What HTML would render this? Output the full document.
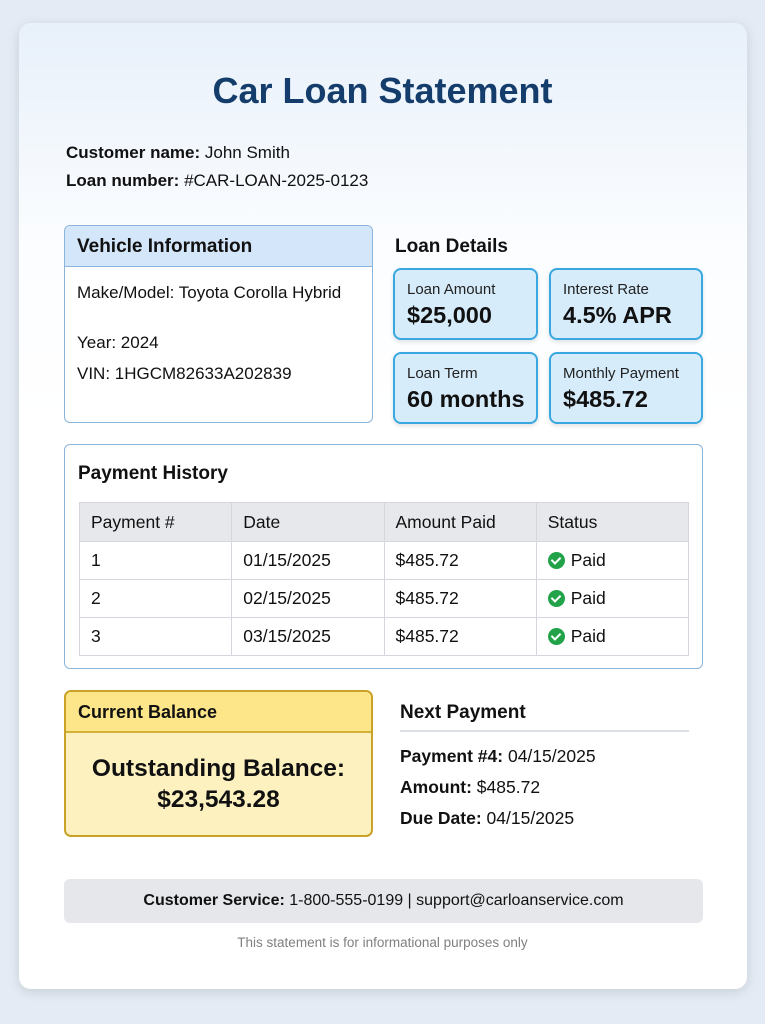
<!DOCTYPE html>
<html><head><meta charset="utf-8"><style>
*{box-sizing:border-box;margin:0;padding:0}
body{width:765px;height:1024px;background:#e4ebf4;font-family:"Liberation Sans",sans-serif;color:#111;position:relative;overflow:hidden}
.card{position:absolute;left:19px;top:23px;width:728px;height:966px;border-radius:12px;background:linear-gradient(#e8f0fa 0px,#fbfdff 220px,#fff 400px);box-shadow:0 3px 12px rgba(0,0,0,.12)}
.a{position:absolute}
h1{position:absolute;left:0;width:765px;top:70px;text-align:center;font-size:36px;color:#143d6b;font-weight:bold}
.t16{font-size:17px}
.box{position:absolute;border:1px solid #8ab4dc;border-radius:6px;background:#fff;overflow:hidden}
.tile{position:absolute;width:145px;height:72px;background:#d6ecfb;border:2px solid #3aa8e0;border-radius:8px;box-shadow:0 2px 5px rgba(0,0,0,.12)}
.tile .l{position:absolute;left:12px;top:11px;font-size:15px;color:#222;white-space:nowrap}
.tile .v{position:absolute;left:12px;top:32px;font-size:23.5px;font-weight:bold;white-space:nowrap}
table{position:absolute;left:14px;top:57px;width:610px;border-collapse:collapse;font-size:17.5px}
td{border:1px solid #d4d8de;height:38px;padding-left:11px;width:25%}
tr:first-child td{background:#e6e8ec;height:39px}
.chk{display:inline-block;width:17px;height:17px;border-radius:50%;background:#22a34a;vertical-align:-3px;margin-right:6px;position:relative}
.chk:after{content:"";position:absolute;left:5px;top:3px;width:4px;height:7px;border:solid #fff;border-width:0 2px 2px 0;transform:rotate(45deg)}
</style></head><body>
<div class="card"></div>
<h1>Car Loan Statement</h1>
<div class="a t16" style="left:66px;top:143px"><b>Customer name:</b> John Smith</div>
<div class="a t16" style="left:66px;top:171px"><b>Loan number:</b> #CAR-LOAN-2025-0123</div>

<div class="box" style="left:64px;top:225px;width:309px;height:198px">
<div style="height:41px;background:#d4e6fa;border-bottom:1px solid #8ab4dc;font-size:19px;font-weight:bold;padding:10px 0 0 12px">Vehicle Information</div>
<div class="a t16" style="left:12px;top:57px">Make/Model: Toyota Corolla Hybrid</div>
<div class="a t16" style="left:12px;top:107px">Year: 2024</div>
<div class="a t16" style="left:12px;top:138px">VIN: 1HGCM82633A202839</div>
</div>

<div class="a" style="left:395px;top:236px;font-size:19px;font-weight:bold">Loan Details</div>
<div class="tile" style="left:393px;top:268px"><div class="l">Loan Amount</div><div class="v">$25,000</div></div>
<div class="tile" style="left:549px;top:268px;width:154px"><div class="l">Interest Rate</div><div class="v">4.5% APR</div></div>
<div class="tile" style="left:393px;top:352px"><div class="l">Loan Term</div><div class="v">60 months</div></div>
<div class="tile" style="left:549px;top:352px;width:154px"><div class="l">Monthly Payment</div><div class="v">$485.72</div></div>

<div class="box" style="left:64px;top:444px;width:639px;height:225px">
<div class="a" style="left:13px;top:18px;font-size:19px;font-weight:bold">Payment History</div>
<table>
<tr><td>Payment #</td><td>Date</td><td>Amount Paid</td><td>Status</td></tr>
<tr><td>1</td><td>01/15/2025</td><td>$485.72</td><td><span class="chk"></span>Paid</td></tr>
<tr><td>2</td><td>02/15/2025</td><td>$485.72</td><td><span class="chk"></span>Paid</td></tr>
<tr><td>3</td><td>03/15/2025</td><td>$485.72</td><td><span class="chk"></span>Paid</td></tr>
</table>
</div>

<div class="a" style="left:64px;top:690px;width:309px;height:147px;border:2px solid #c9a227;border-radius:7px;background:#fdf1c0;overflow:hidden">
<div style="height:41px;background:#fde68a;border-bottom:2px solid #d4b23a;font-size:18px;font-weight:bold;padding:10px 0 0 12px">Current Balance</div>
<div style="text-align:center;font-size:24.5px;font-weight:bold;line-height:31px;margin-top:20px">Outstanding Balance:<br>$23,543.28</div>
</div>

<div class="a" style="left:400px;top:702px;font-size:19px;font-weight:bold">Next Payment</div>
<div class="a" style="left:400px;top:730px;width:289px;height:2px;background:#dcdfe4"></div>
<div class="a" style="left:400px;top:746px;font-size:17.5px"><b>Payment #4:</b> 04/15/2025</div>
<div class="a" style="left:400px;top:777px;font-size:17.5px"><b>Amount:</b> $485.72</div>
<div class="a" style="left:400px;top:808px;font-size:17.5px"><b>Due Date:</b> 04/15/2025</div>

<div class="a" style="left:64px;top:879px;width:639px;height:44px;background:#e5e7eb;border-radius:6px;text-align:center;font-size:16px;line-height:44px"><b>Customer Service:</b> 1-800-555-0199 | support@carloanservice.com</div>
<div class="a" style="left:0;width:765px;top:935px;text-align:center;font-size:13.5px;color:#808080">This statement is for informational purposes only</div>
</body></html>
